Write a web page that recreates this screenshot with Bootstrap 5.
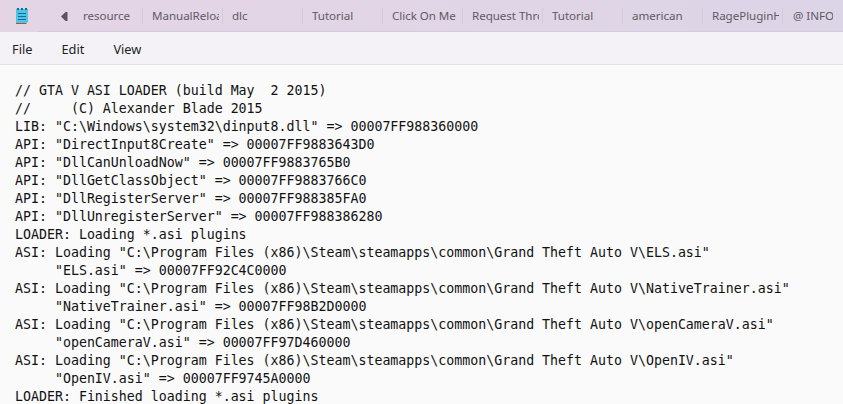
<!DOCTYPE html>
<html lang="en">
<head>
<meta charset="utf-8">
<title>Notepad</title>
<link href="https://cdn.jsdelivr.net/npm/bootstrap@5.3.0/dist/css/bootstrap.min.css" rel="stylesheet">
<style>
html,body{height:404px;overflow:hidden;background:#fafafa}
.np-title{height:32px;background:linear-gradient(90deg,#e4d5e5,#e2d5e6 35%,#dcd5e7);font-family:"Noto Sans","Open Sans",sans-serif;font-size:11.6px;letter-spacing:-.05px;color:#5e5a62}
.np-home{width:38px;height:32px;flex:none;padding:8px 0 0 16px}
.np-icon{width:12px;height:16px;display:block}
.np-strip{height:32px;border-bottom:1px solid #d3ccdb;padding-top:1px}
.np-arrow{width:7px;height:9px;margin-left:23px;margin-right:15px;flex:none}
.np-tab{width:80px;flex:none;height:16px;line-height:16px;padding-left:9px;border-right:1px solid #d3cbd9}
.np-label{display:block;width:67px;white-space:nowrap;overflow:hidden}
.np-tab-first{width:60px;padding-left:0}
.np-tab-first .np-label{width:58px}
.np-tab-last{border-right:0;width:50px;padding-left:10px}
.np-tab-last .np-label{width:40px}
.np-menu{height:33px;background:#f4f2f7;border-bottom:1px solid #e4e2e7;font-family:"Noto Sans","Open Sans",sans-serif;font-size:12.8px;color:#1f1f1f;padding:3px 0 0 12px;gap:29px}
.np-text{margin:0;padding:17px 0 0 15px;font-family:"DejaVu Sans Mono",monospace;font-size:13.28px;line-height:18px;color:#111;background:#fafafa;white-space:pre;overflow:hidden}
</style>
</head>
<body>
<div class="np-title d-flex">
<div class="np-home"><svg class="np-icon" viewBox="0 0 12 16"><rect y="1" width="12" height="14" fill="#4fc3e8"/><rect y="15" width="12" height="1" fill="#a5562a"/><path d="M1 0h2v2H1zM5 0h2v2H5zM9 0h2v2H9z" fill="#12708f"/><path d="M2 5.500h8M2 8.500h8M2 11.500h8" stroke="#146f8e"/><path d="M10 16l2-2v2z" fill="#e8e4d8"/></svg></div>
<div class="np-strip d-flex flex-grow-1 align-items-center">
<svg class="np-arrow" viewBox="0 0 7 9"><path d="M6.500 0v9H4.500L0 4.500l4.500-4.500z" fill="#5a5560"/></svg>
<div class="d-flex">
<div class="np-tab np-tab-first"><span class="np-label">resource</span></div>
<div class="np-tab"><span class="np-label">ManualReload</span></div>
<div class="np-tab"><span class="np-label">dlc</span></div>
<div class="np-tab"><span class="np-label">Tutorial</span></div>
<div class="np-tab"><span class="np-label">Click On Me</span></div>
<div class="np-tab"><span class="np-label">Request Through</span></div>
<div class="np-tab"><span class="np-label">Tutorial</span></div>
<div class="np-tab"><span class="np-label">american</span></div>
<div class="np-tab"><span class="np-label">RagePluginHook</span></div>
<div class="np-tab np-tab-last"><span class="np-label">@ INFO</span></div>
</div>
</div>
</div>
<div class="np-menu d-flex align-items-center"><span>File</span><span>Edit</span><span>View</span></div>
<pre class="np-text">// GTA V ASI LOADER (build May  2 2015)
//     (C) Alexander Blade 2015
LIB: "C:\Windows\system32\dinput8.dll" =&gt; 00007FF988360000
API: "DirectInput8Create" =&gt; 00007FF9883643D0
API: "DllCanUnloadNow" =&gt; 00007FF9883765B0
API: "DllGetClassObject" =&gt; 00007FF9883766C0
API: "DllRegisterServer" =&gt; 00007FF988385FA0
API: "DllUnregisterServer" =&gt; 00007FF988386280
LOADER: Loading *.asi plugins
ASI: Loading "C:\Program Files (x86)\Steam\steamapps\common\Grand Theft Auto V\ELS.asi"
     "ELS.asi" =&gt; 00007FF92C4C0000
ASI: Loading "C:\Program Files (x86)\Steam\steamapps\common\Grand Theft Auto V\NativeTrainer.asi"
     "NativeTrainer.asi" =&gt; 00007FF98B2D0000
ASI: Loading "C:\Program Files (x86)\Steam\steamapps\common\Grand Theft Auto V\openCameraV.asi"
     "openCameraV.asi" =&gt; 00007FF97D460000
ASI: Loading "C:\Program Files (x86)\Steam\steamapps\common\Grand Theft Auto V\OpenIV.asi"
     "OpenIV.asi" =&gt; 00007FF9745A0000
LOADER: Finished loading *.asi plugins</pre>
<script src="https://cdn.jsdelivr.net/npm/bootstrap@5.3.0/dist/js/bootstrap.bundle.min.js"></script>
</body>
</html>
